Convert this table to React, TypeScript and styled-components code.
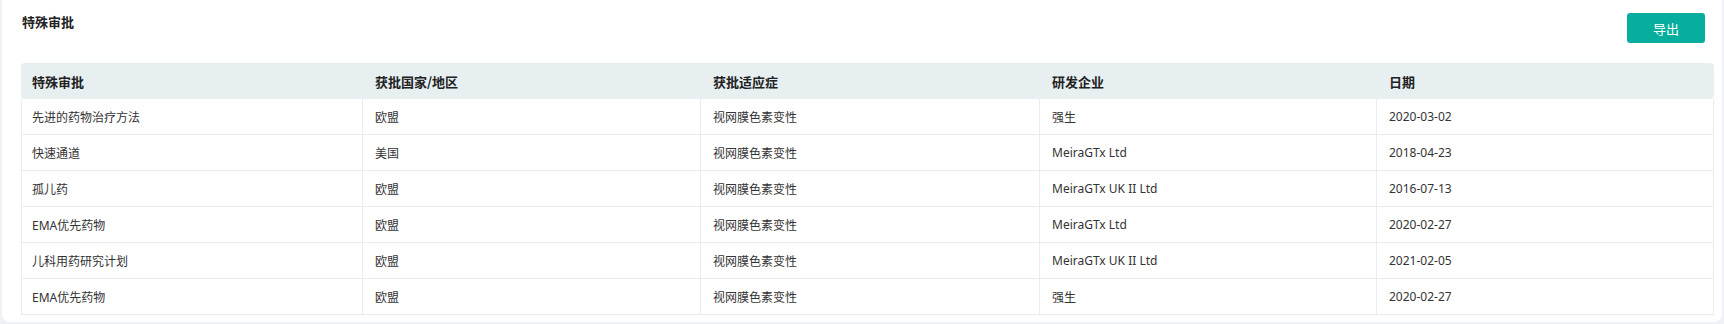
import React from "react";
import styled, { createGlobalStyle } from "styled-components";

const GlobalStyle = createGlobalStyle`
  html, body {
    margin: 0;
    padding: 0;
    background: #eff1f6;
  }
  body {
    font-family: "Noto Sans", "Noto Sans CJK SC", sans-serif;
    color: #333;
  }
`;

const Card = styled.section`
  margin: 0 2px 2px 2px;
  height: 322px;
  box-sizing: border-box;
  background: #ffffff;
  border-radius: 0 0 8px 8px;
  padding: 13px 8px 0 19px;
`;

const Toolbar = styled.div`
  display: flex;
  justify-content: space-between;
  align-items: flex-start;
  height: 30px;
  margin-bottom: 20px;
`;

const Title = styled.h2`
  margin: 0;
  padding-left: 1px;
  font-size: 13px;
  line-height: 18px;
  font-weight: 700;
  color: #222;
  font-family: "Noto Sans CJK SC", sans-serif;
`;

const ExportButton = styled.button`
  width: 78px;
  height: 30px;
  margin-right: 9px;
  border: none;
  border-radius: 3px;
  background: #07ae9e;
  color: #fff;
  font-size: 13px;
  font-family: "Noto Sans CJK SC", sans-serif;
  cursor: pointer;
`;

const Table = styled.div`
  display: grid;
  grid-template-columns: 341fr 338fr 339fr 337fr 338fr;
`;

const HeadRow = styled.div`
  display: contents;
`;

const HeadCell = styled.div<{ $first?: boolean; $last?: boolean }>`
  height: 36px;
  display: flex;
  align-items: center;
  padding-left: ${(p) => (p.$first ? "11px" : "13px")};
  background: #e7eff1;
  font-family: "Noto Sans CJK SC", sans-serif;
  font-size: 13px;
  font-weight: 700;
  color: #222;
  border-radius: ${(p) =>
    p.$first ? "4px 0 0 4px" : p.$last ? "0 4px 4px 0" : "0"};
`;

const Cell = styled.div<{ $first?: boolean; $last?: boolean }>`
  height: 35px;
  display: flex;
  align-items: center;
  padding-left: ${(p) => (p.$first ? "10px" : "12px")};
  border-left: 1px solid #e9ebf2;
  border-right: ${(p) => (p.$last ? "1px solid #e9ebf2" : "none")};
  border-bottom: 1px solid #e9ebf2;
  font-size: 12px;
  color: #333;
  background: #fff;
  white-space: nowrap;
`;

const headers = ["特殊审批", "获批国家/地区", "获批适应症", "研发企业", "日期"];

const rows: string[][] = [
  ["先进的药物治疗方法", "欧盟", "视网膜色素变性", "强生", "2020-03-02"],
  ["快速通道", "美国", "视网膜色素变性", "MeiraGTx Ltd", "2018-04-23"],
  ["孤儿药", "欧盟", "视网膜色素变性", "MeiraGTx UK II Ltd", "2016-07-13"],
  ["EMA优先药物", "欧盟", "视网膜色素变性", "MeiraGTx Ltd", "2020-02-27"],
  ["儿科用药研究计划", "欧盟", "视网膜色素变性", "MeiraGTx UK II Ltd", "2021-02-05"],
  ["EMA优先药物", "欧盟", "视网膜色素变性", "强生", "2020-02-27"],
];

export default function App() {
  return (
    <>
      <GlobalStyle />
      <Card>
        <Toolbar>
          <Title>特殊审批</Title>
          <ExportButton>导出</ExportButton>
        </Toolbar>
        <Table>
          <HeadRow>
            {headers.map((h, i) => (
              <HeadCell key={h} $first={i === 0} $last={i === headers.length - 1}>
                {h}
              </HeadCell>
            ))}
          </HeadRow>
          {rows.map((r, ri) =>
            r.map((c, ci) => (
              <Cell key={`${ri}-${ci}`} $first={ci === 0} $last={ci === r.length - 1}>
                {c}
              </Cell>
            ))
          )}
        </Table>
      </Card>
    </>
  );
}
